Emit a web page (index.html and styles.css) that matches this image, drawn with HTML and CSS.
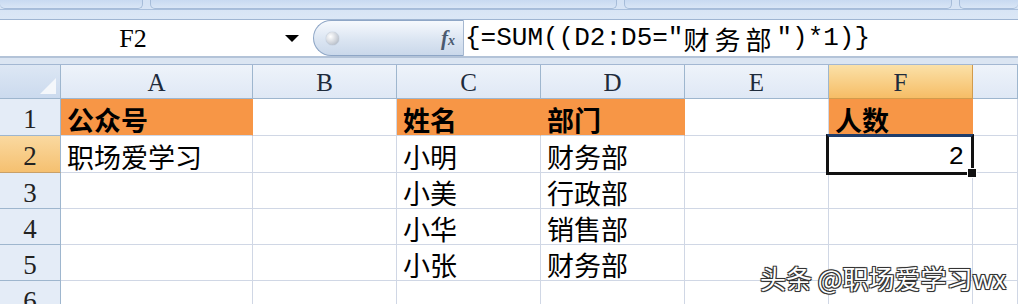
FILE: index.html
```html
<!DOCTYPE html>
<html lang="zh-CN">
<head>
    <meta charset="UTF-8">
    <title>财务部人数统计</title>
    <link rel="stylesheet" href="styles.css">
</head>
<body>
    <div class="ribbon">
        <div class="tabs">
            <div class="tab tab-1"></div>
            <div class="tab tab-2"></div>
            <div class="tab tab-3"></div>
            <div class="tab tab-4"></div>
        </div>
    </div>

    <div class="formula-bar">
        <div class="name-box">
            <span class="cell-ref">F2</span>
            <span class="drop-arrow"></span>
        </div>
        <div class="fx-pill">
            <span class="knob"></span>
            <span class="fx">f<sub>x</sub></span>
        </div>
        <div class="formula">{=SUM((D2:D5=″<span class="cjk">财务部</span>″)*1)}</div>
    </div>

    <div class="bar-gap"></div>

    <div class="sheet">
        <!-- column headers -->
        <div class="corner"><span class="corner-mark"></span></div>
        <div class="col-head">A</div>
        <div class="col-head">B</div>
        <div class="col-head">C</div>
        <div class="col-head">D</div>
        <div class="col-head">E</div>
        <div class="col-head active">F</div>
        <div class="col-head"></div>

        <!-- row 1 -->
        <div class="row-head">1</div>
        <div class="cell head-fill">公众号</div>
        <div class="cell"></div>
        <div class="cell head-fill">姓名</div>
        <div class="cell head-fill">部门</div>
        <div class="cell"></div>
        <div class="cell head-fill">人数</div>
        <div class="cell"></div>

        <!-- row 2 -->
        <div class="row-head active">2</div>
        <div class="cell">职场爱学习</div>
        <div class="cell"></div>
        <div class="cell">小明</div>
        <div class="cell">财务部</div>
        <div class="cell"></div>
        <div class="cell selected num">2</div>
        <div class="cell"></div>

        <!-- row 3 -->
        <div class="row-head">3</div>
        <div class="cell"></div>
        <div class="cell"></div>
        <div class="cell">小美</div>
        <div class="cell">行政部</div>
        <div class="cell"></div>
        <div class="cell"></div>
        <div class="cell"></div>

        <!-- row 4 -->
        <div class="row-head">4</div>
        <div class="cell"></div>
        <div class="cell"></div>
        <div class="cell">小华</div>
        <div class="cell">销售部</div>
        <div class="cell"></div>
        <div class="cell"></div>
        <div class="cell"></div>

        <!-- row 5 -->
        <div class="row-head">5</div>
        <div class="cell"></div>
        <div class="cell"></div>
        <div class="cell">小张</div>
        <div class="cell">财务部</div>
        <div class="cell"></div>
        <div class="cell"></div>
        <div class="cell"></div>

        <!-- row 6 -->
        <div class="row-head">6</div>
        <div class="cell"></div>
        <div class="cell"></div>
        <div class="cell"></div>
        <div class="cell"></div>
        <div class="cell"></div>
        <div class="cell"></div>
        <div class="cell"></div>
    </div>

    <div class="watermark">头条 @职场爱学习wx</div>
</body>
</html>
```

FILE: styles.css
```css
* {
    margin: 0;
    padding: 0;
    box-sizing: border-box;
}

body {
    width: 1018px;
    height: 304px;
    overflow: hidden;
    position: relative;
    background: #fff;
    font-family: "Liberation Mono", "Noto Sans CJK SC", monospace;
    color: #000;
}

/* top ribbon strip */
.ribbon {
    height: 20px;
    background: linear-gradient(#d4e2f4, #dbe7f6);
    border-bottom: 1px solid #9fb5d2;
}

.tabs {
    display: flex;
    height: 10px;
    gap: 7px;
    border-bottom: 1px solid #a9bfdc;
}

.tab {
    height: 9px;
    background: linear-gradient(#c8daf1, #d9e6f6);
    border: 1px solid #a6bcd9;
    border-top: none;
    border-radius: 0 0 5px 5px;
}

.tab-1 { width: 143px; border-left: none; }
.tab-2 { width: 467px; }
.tab-3 { width: 328px; }
.tab-4 { flex: 1; border-right: none; }

/* formula bar */
.formula-bar {
    display: flex;
    height: 38px;
    background: #fff;
    border-bottom: 2px solid #b3c3d8;
}

.name-box {
    width: 313px;
    display: flex;
    align-items: center;
}

.cell-ref {
    width: 266px;
    text-align: center;
    font-family: "Liberation Serif", serif;
    font-size: 26px;
    padding-top: 2px;
}

.drop-arrow {
    width: 0;
    height: 0;
    border-left: 7px solid transparent;
    border-right: 7px solid transparent;
    border-top: 7px solid #000;
    margin-left: 19px;
}

.fx-pill {
    width: 151px;
    display: flex;
    align-items: center;
    justify-content: space-between;
    padding: 0 8px 0 12px;
    background: linear-gradient(#f6f9fd, #dbe5f2 55%, #cad8ea);
    border: 1px solid #8ea6c6;
    border-right: 1px solid #a6b8d0;
    border-radius: 19px 0 0 19px;
}

.knob {
    width: 13px;
    height: 13px;
    border-radius: 50%;
    background: radial-gradient(circle at 35% 35%, #ffffff, #c9ced6 60%, #9ea7b3);
    box-shadow: 0 0 1px #7f8ea3;
}

.fx {
    font-family: "Liberation Serif", serif;
    font-style: italic;
    font-size: 21px;
    color: #4a5a70;
    font-weight: bold;
}

.fx sub {
    font-size: 14px;
    vertical-align: 0;
}

.formula {
    flex: 1;
    display: flex;
    align-items: center;
    padding-left: 1px;
    font-size: 26px;
    white-space: pre;
}

.formula .cjk {
    font-family: "Noto Sans CJK SC", sans-serif;
    font-size: 26px;
    letter-spacing: 5px;
}

.bar-gap {
    height: 7px;
    background: #dbe5f2;
    border-bottom: 1px solid #a3b7d2;
}

/* worksheet grid */
.sheet {
    display: grid;
    grid-template-columns: 61px 192px 144px 144px 144px 144px 144px 1fr;
    grid-template-rows: 34px 37px 37px 36px 36px 36px 36px;
}

.corner,
.col-head,
.row-head {
    display: flex;
    align-items: center;
    justify-content: center;
    font-family: "Liberation Serif", serif;
    font-size: 25px;
    color: #1e2b3c;
    background: linear-gradient(#eef3fa, #dfe8f5);
    border-right: 1px solid #9eb6ce;
    border-bottom: 1px solid #9eb6ce;
}

.col-head {
    padding-top: 3px;
}

.corner {
    justify-content: flex-end;
    align-items: flex-end;
    padding: 0 4px 4px 0;
    background: linear-gradient(#dde7f4, #cbdaee);
}

.corner-mark {
    width: 0;
    height: 0;
    border-left: 16px solid transparent;
    border-bottom: 16px solid #f4f7fb;
}

.col-head.active {
    background: linear-gradient(#fbe1a8, #f6bd66);
    border-right-color: #d29b4c;
    border-bottom-color: #d29b4c;
}

.row-head {
    background: #e4ecf7;
    font-size: 27px;
    color: #222;
    padding-top: 5px;
}

.row-head.active {
    background: linear-gradient(#fad9a0, #f5c070);
    border-bottom-color: #c9a068;
}

.cell {
    display: flex;
    align-items: flex-end;
    padding: 0 0 2px 6px;
    font-family: "Noto Sans CJK SC", sans-serif;
    font-size: 27px;
    line-height: 1;
    white-space: nowrap;
    border-right: 1px solid #d0d7e5;
    border-bottom: 1px solid #d0d7e5;
}

.cell.head-fill {
    background: #f79646;
    font-weight: bold;
    border-right-color: #f79646;
}

.cell.num {
    justify-content: flex-end;
    padding-right: 8px;
    font-family: "Liberation Mono", monospace;
    font-size: 26px;
}

.cell.selected {
    position: relative;
}

.cell.selected::after {
    content: "";
    position: absolute;
    left: -3px;
    top: -2px;
    right: -2px;
    bottom: -3px;
    border: 3px solid #111;
    border-top-color: #1f3d6b;
}

.cell.selected::before {
    content: "";
    position: absolute;
    right: -5px;
    bottom: -6px;
    width: 8px;
    height: 8px;
    background: #111;
    border: 1px solid #fff;
    z-index: 1;
}

.watermark {
    position: absolute;
    left: 760px;
    top: 259px;
    font-family: "Noto Sans CJK SC", sans-serif;
    font-size: 26px;
    color: #fff;
    text-shadow: -1px -1px 0 #333, 1px -1px 0 #333, -1px 1px 0 #333, 1px 1px 0 #333, 0 0 2px #000;
}
```
